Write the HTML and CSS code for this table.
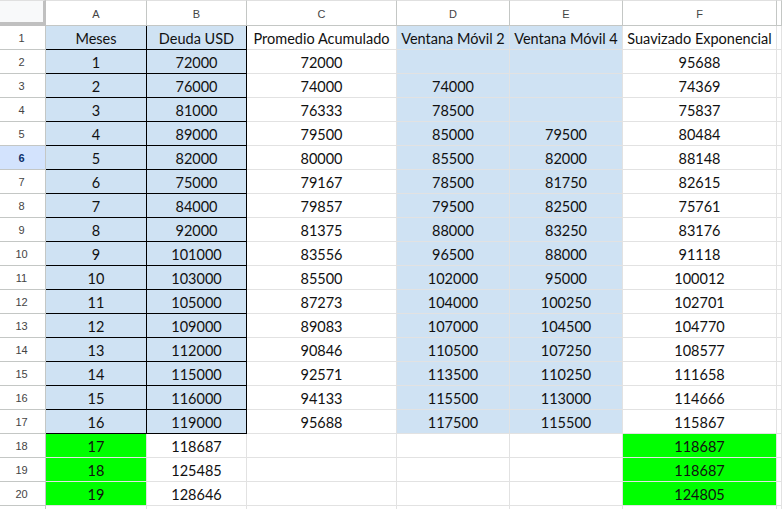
FILE: index.html
```html
<!DOCTYPE html>
<html lang="es">
<head>
<meta charset="utf-8">
<title>Hoja</title>
<link rel="stylesheet" href="styles.css">
</head>
<body>
<div class="sheet">
  <div class="row head">
    <div class="corner"></div><div class="ch">A</div><div class="ch">B</div><div class="ch">C</div><div class="ch">D</div><div class="ch">E</div><div class="ch">F</div><div class="ch"></div>
  </div>
  <div class="row"><div class="rh">1</div><div class="c bl bk">Meses</div><div class="c bl bk">Deuda USD</div><div class="c">Promedio Acumulado</div><div class="c bl">Ventana Móvil 2</div><div class="c bl">Ventana Móvil 4</div><div class="c">Suavizado Exponencial</div><div class="c"></div></div>
  <div class="row"><div class="rh">2</div><div class="c bl bk">1</div><div class="c bl bk">72000</div><div class="c">72000</div><div class="c bl"></div><div class="c bl"></div><div class="c">95688</div><div class="c"></div></div>
  <div class="row"><div class="rh">3</div><div class="c bl bk">2</div><div class="c bl bk">76000</div><div class="c">74000</div><div class="c bl">74000</div><div class="c bl"></div><div class="c">74369</div><div class="c"></div></div>
  <div class="row"><div class="rh">4</div><div class="c bl bk">3</div><div class="c bl bk">81000</div><div class="c">76333</div><div class="c bl">78500</div><div class="c bl"></div><div class="c">75837</div><div class="c"></div></div>
  <div class="row"><div class="rh">5</div><div class="c bl bk">4</div><div class="c bl bk">89000</div><div class="c">79500</div><div class="c bl">85000</div><div class="c bl">79500</div><div class="c">80484</div><div class="c"></div></div>
  <div class="row"><div class="rh sel">6</div><div class="c bl bk">5</div><div class="c bl bk">82000</div><div class="c">80000</div><div class="c bl">85500</div><div class="c bl">82000</div><div class="c">88148</div><div class="c"></div></div>
  <div class="row"><div class="rh">7</div><div class="c bl bk">6</div><div class="c bl bk">75000</div><div class="c">79167</div><div class="c bl">78500</div><div class="c bl">81750</div><div class="c">82615</div><div class="c"></div></div>
  <div class="row"><div class="rh">8</div><div class="c bl bk">7</div><div class="c bl bk">84000</div><div class="c">79857</div><div class="c bl">79500</div><div class="c bl">82500</div><div class="c">75761</div><div class="c"></div></div>
  <div class="row"><div class="rh">9</div><div class="c bl bk">8</div><div class="c bl bk">92000</div><div class="c">81375</div><div class="c bl">88000</div><div class="c bl">83250</div><div class="c">83176</div><div class="c"></div></div>
  <div class="row"><div class="rh">10</div><div class="c bl bk">9</div><div class="c bl bk">101000</div><div class="c">83556</div><div class="c bl">96500</div><div class="c bl">88000</div><div class="c">91118</div><div class="c"></div></div>
  <div class="row"><div class="rh">11</div><div class="c bl bk">10</div><div class="c bl bk">103000</div><div class="c">85500</div><div class="c bl">102000</div><div class="c bl">95000</div><div class="c">100012</div><div class="c"></div></div>
  <div class="row"><div class="rh">12</div><div class="c bl bk">11</div><div class="c bl bk">105000</div><div class="c">87273</div><div class="c bl">104000</div><div class="c bl">100250</div><div class="c">102701</div><div class="c"></div></div>
  <div class="row"><div class="rh">13</div><div class="c bl bk">12</div><div class="c bl bk">109000</div><div class="c">89083</div><div class="c bl">107000</div><div class="c bl">104500</div><div class="c">104770</div><div class="c"></div></div>
  <div class="row"><div class="rh">14</div><div class="c bl bk">13</div><div class="c bl bk">112000</div><div class="c">90846</div><div class="c bl">110500</div><div class="c bl">107250</div><div class="c">108577</div><div class="c"></div></div>
  <div class="row"><div class="rh">15</div><div class="c bl bk">14</div><div class="c bl bk">115000</div><div class="c">92571</div><div class="c bl">113500</div><div class="c bl">110250</div><div class="c">111658</div><div class="c"></div></div>
  <div class="row"><div class="rh">16</div><div class="c bl bk">15</div><div class="c bl bk">116000</div><div class="c">94133</div><div class="c bl">115500</div><div class="c bl">113000</div><div class="c">114666</div><div class="c"></div></div>
  <div class="row"><div class="rh">17</div><div class="c bl bk">16</div><div class="c bl bk">119000</div><div class="c">95688</div><div class="c bl">117500</div><div class="c bl">115500</div><div class="c">115867</div><div class="c"></div></div>
  <div class="row"><div class="rh">18</div><div class="c gr">17</div><div class="c">118687</div><div class="c"></div><div class="c"></div><div class="c"></div><div class="c gr">118687</div><div class="c"></div></div>
  <div class="row"><div class="rh">19</div><div class="c gr">18</div><div class="c">125485</div><div class="c"></div><div class="c"></div><div class="c"></div><div class="c gr">118687</div><div class="c"></div></div>
  <div class="row"><div class="rh">20</div><div class="c gr">19</div><div class="c">128646</div><div class="c"></div><div class="c"></div><div class="c"></div><div class="c gr">124805</div><div class="c"></div></div>
  <div class="row"><div class="rh"></div><div class="c"></div><div class="c"></div><div class="c"></div><div class="c"></div><div class="c"></div><div class="c"></div><div class="c"></div></div>
</div>
</body>
</html>
```

FILE: styles.css
```css
* { box-sizing: border-box; }
html, body { margin: 0; padding: 0; background: #fff; overflow: hidden; }
body { width: 782px; height: 509px; }
.sheet { width: 782px; height: 509px; overflow: hidden; }
.row {
  display: grid;
  grid-template-columns: 46px 101px 100px 150px 113px 113px 154px 1fr;
  height: 24px;
}
.row.head { height: 26px; }
.corner {
  background: #f8f9fa;
  border-right: 3px solid #c0c0c0;
  border-bottom: 4px solid #c0c0c0;
  border-top: 1px solid #e0e0e0;
}
.ch {
  border-right: 1px solid #c4c7c5;
  border-bottom: 1px solid #c4c7c5;
  border-top: 1px solid #e0e0e0;
  font: 11px "Liberation Sans", Arial, sans-serif;
  color: #444;
  display: flex;
  align-items: center;
  justify-content: center;
  padding-top: 1px;
}
.rh {
  border-right: 1px solid #c4c7c5;
  border-bottom: 1px solid #c4c7c5;
  font: 11px "Liberation Sans", Arial, sans-serif;
  color: #444;
  display: flex;
  align-items: center;
  justify-content: center;
  padding-right: 2px;
}
.rh.sel { background: #d3e3fd; color: #0b2f6b; font-weight: bold; }
.c {
  border-right: 1px solid #e2e2e2;
  border-bottom: 1px solid #e2e2e2;
  font: 14.5px Lato, "Open Sans", sans-serif;
  color: #111;
  display: flex;
  align-items: center;
  justify-content: center;
  white-space: nowrap;
  overflow: hidden;
  padding-top: 1px;
}
.c.bl { background: #cfe2f3; }
.c.gr { background: #00ff00; }
.c.bk { border-right-color: #000; border-bottom-color: #000; }
```
